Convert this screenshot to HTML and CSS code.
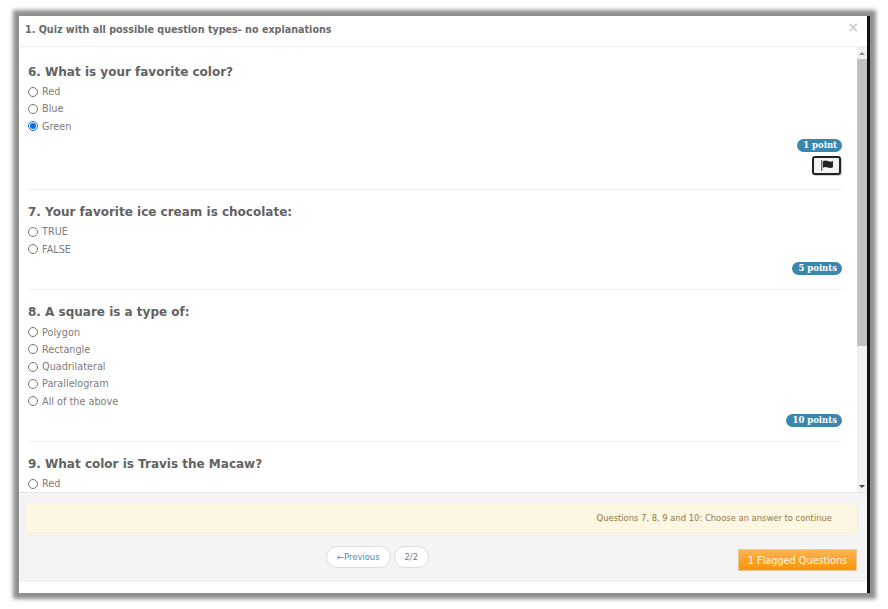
FILE: index.html
```html
<!DOCTYPE html>
<html lang="en">
<head>
<meta charset="utf-8">
<title>Quiz</title>
<link rel="stylesheet" href="styles.css">
</head>
<body>
<div class="modal">
  <header class="modal-header">
    <h3 class="modal-title">1. Quiz with all possible question types- no explanations</h3>
    <span class="close">×</span>
  </header>
  <div class="modal-body">
    <div class="questions">
      <section class="question">
        <h4>6. What is your favorite color?</h4>
        <label class="answer"><input type="radio" name="q6">Red</label>
        <label class="answer"><input type="radio" name="q6">Blue</label>
        <label class="answer"><input type="radio" name="q6" checked>Green</label>
        <div class="meta">
          <span class="badge">1 point</span>
          <button class="flag" type="button" aria-label="Flag">
            <svg width="14" height="11" viewBox="0 0 14 12"><rect x="0.5" y="0" width="1.4" height="12" fill="#666"/><path d="M2.5 1.500C4.500 0 6.500 0.500 8 1.200S11.500 2.200 13.500 1V8C11.500 9.200 9.500 8.800 8 8.200S4.500 7 2.500 8.500Z" fill="#222"/></svg>
          </button>
        </div>
      </section>
      <section class="question">
        <h4>7. Your favorite ice cream is chocolate:</h4>
        <label class="answer"><input type="radio" name="q7">TRUE</label>
        <label class="answer"><input type="radio" name="q7">FALSE</label>
        <div class="meta"><span class="badge">5 points</span></div>
      </section>
      <section class="question">
        <h4>8. A square is a type of:</h4>
        <label class="answer"><input type="radio" name="q8">Polygon</label>
        <label class="answer"><input type="radio" name="q8">Rectangle</label>
        <label class="answer"><input type="radio" name="q8">Quadrilateral</label>
        <label class="answer"><input type="radio" name="q8">Parallelogram</label>
        <label class="answer"><input type="radio" name="q8">All of the above</label>
        <div class="meta"><span class="badge">10 points</span></div>
      </section>
      <section class="question">
        <h4>9. What color is Travis the Macaw?</h4>
        <label class="answer"><input type="radio" name="q9">Red</label>
      </section>
    </div>
    <div class="scrollbar">
      <span class="arrow up"></span>
      <span class="track"><span class="thumb"></span></span>
      <span class="arrow down"></span>
    </div>
  </div>
  <footer class="modal-footer">
    <div class="alert">Questions 7, 8, 9 and 10: Choose an answer to continue</div>
    <div class="nav">
      <div class="pager">
        <a class="pill link" href="#">←Previous</a>
        <span class="pill">2/2</span>
      </div>
      <button class="flagged" type="button">1 Flagged Questions</button>
    </div>
  </footer>
</div>
</body>
</html>
```
FILE: styles.css
```css
* { box-sizing: border-box; }
html, body { margin: 0; height: 100%; }
body {
  background: #fff;
  padding: 16px 19px;
  font-family: "DejaVu Sans", Verdana, sans-serif;
  color: #555;
  overflow: hidden;
}
.modal {
  width: 851px;
  height: 577px;
  background: #fff;
  border-right: 3px solid #111;
  box-shadow: 0 0 4px 6px #8f8f8f;
  display: flex;
  flex-direction: column;
}
.modal-header {
  height: 31px;
  flex: none;
  border-bottom: 1px solid #eee;
  padding: 0 8px 0 6px;
  display: flex;
  justify-content: space-between;
  align-items: flex-start;
}
.modal-title {
  margin: 7px 0 0;
  font-size: 9.600px;
  line-height: 13px;
  font-weight: 700;
  color: #6a6a6a;
}
.close {
  margin-top: 3px;
  font-size: 14px;
  line-height: 16px;
  font-weight: 700;
  color: #cfcfcf;
}
.modal-body {
  flex: none;
  height: 445px;
  display: flex;
  overflow: hidden;
}
.questions {
  flex: 1;
  min-width: 0;
  padding: 17px 15px 0 9px;
  overflow: hidden;
}
.question {
  border-bottom: 1px solid #eee;
  margin-bottom: 14px;
}
.question:last-child { border-bottom: 0; margin-bottom: 0; }
.question h4 {
  margin: 0 0 3px;
  font-size: 12px;
  line-height: 16px;
  font-weight: 700;
  color: #626262;
}
.answer {
  display: flex;
  align-items: center;
  height: 17.250px;
  font-size: 9.700px;
  color: #7c7c7c;
}
.answer input {
  margin: 0 4px 0 0;
  width: 10px;
  height: 10px;
  flex: none;
  accent-color: #0a6fe0;
}
.meta {
  display: flex;
  flex-direction: column;
  align-items: flex-end;
  padding: 4.600px 0 14px;
  gap: 4px;
}
.badge {
  background: #3a87ad;
  color: #fff;
  font-family: "DejaVu Serif", serif;
  font-size: 8.500px;
  font-weight: 700;
  line-height: 13px;
  padding: 0 5px 0 6px;
  border-radius: 7px;
}
.flag {
  width: 29px;
  height: 19px;
  margin-right: 1px;
  padding: 0;
  background: #f4f4f4;
  border: 2px solid #222;
  border-radius: 3px;
  box-shadow: 1px 1px 1px #ccc;
  display: flex;
  align-items: center;
  justify-content: center;
}
.scrollbar {
  width: 10px;
  flex: none;
  background: #f1f1f1;
  display: flex;
  flex-direction: column;
}
.arrow {
  height: 12px;
  flex: none;
  display: flex;
  justify-content: center;
  align-items: center;
}
.arrow::before {
  content: "";
  border-left: 3px solid transparent;
  border-right: 3px solid transparent;
}
.up::before { border-bottom: 3px solid #888; }
.down::before { border-top: 3px solid #444; }
.track { flex: 1; }
.thumb {
  display: block;
  height: 287px;
  background: #c1c1c1;
}
.modal-footer {
  flex: none;
  height: 90px;
  background: #f4f4f4;
  border-top: 1px solid #e5e5e5;
  padding: 10px 9px 0 6px;
}
.alert {
  height: 30px;
  background: #fcf6e3;
  border: 1px solid #fbeed5;
  border-radius: 2px;
  padding-right: 25px;
  display: flex;
  align-items: center;
  justify-content: flex-end;
  font-size: 8.380px;
  color: #8f7a4c;
}
.nav {
  display: flex;
  justify-content: flex-end;
  align-items: flex-start;
  margin-top: 13px;
  padding-right: 1px;
}
.pager {
  display: flex;
  gap: 3px;
  margin-right: 309px;
}
.pill {
  height: 22px;
  padding: 0 10px;
  background: #fff;
  border: 1px solid #ddd;
  border-radius: 11px;
  display: flex;
  align-items: center;
  font-size: 8.400px;
  color: #777;
  text-decoration: none;
}
.link { color: #3d8fc6; }
.flagged {
  width: 119px;
  height: 22px;
  margin-top: 3px;
  padding: 0;
  background: linear-gradient(#fbb450, #f89406);
  border: 1px solid #e8c89a;
  color: #fff4e0;
  font-family: inherit;
  font-size: 9.700px;
}
```
